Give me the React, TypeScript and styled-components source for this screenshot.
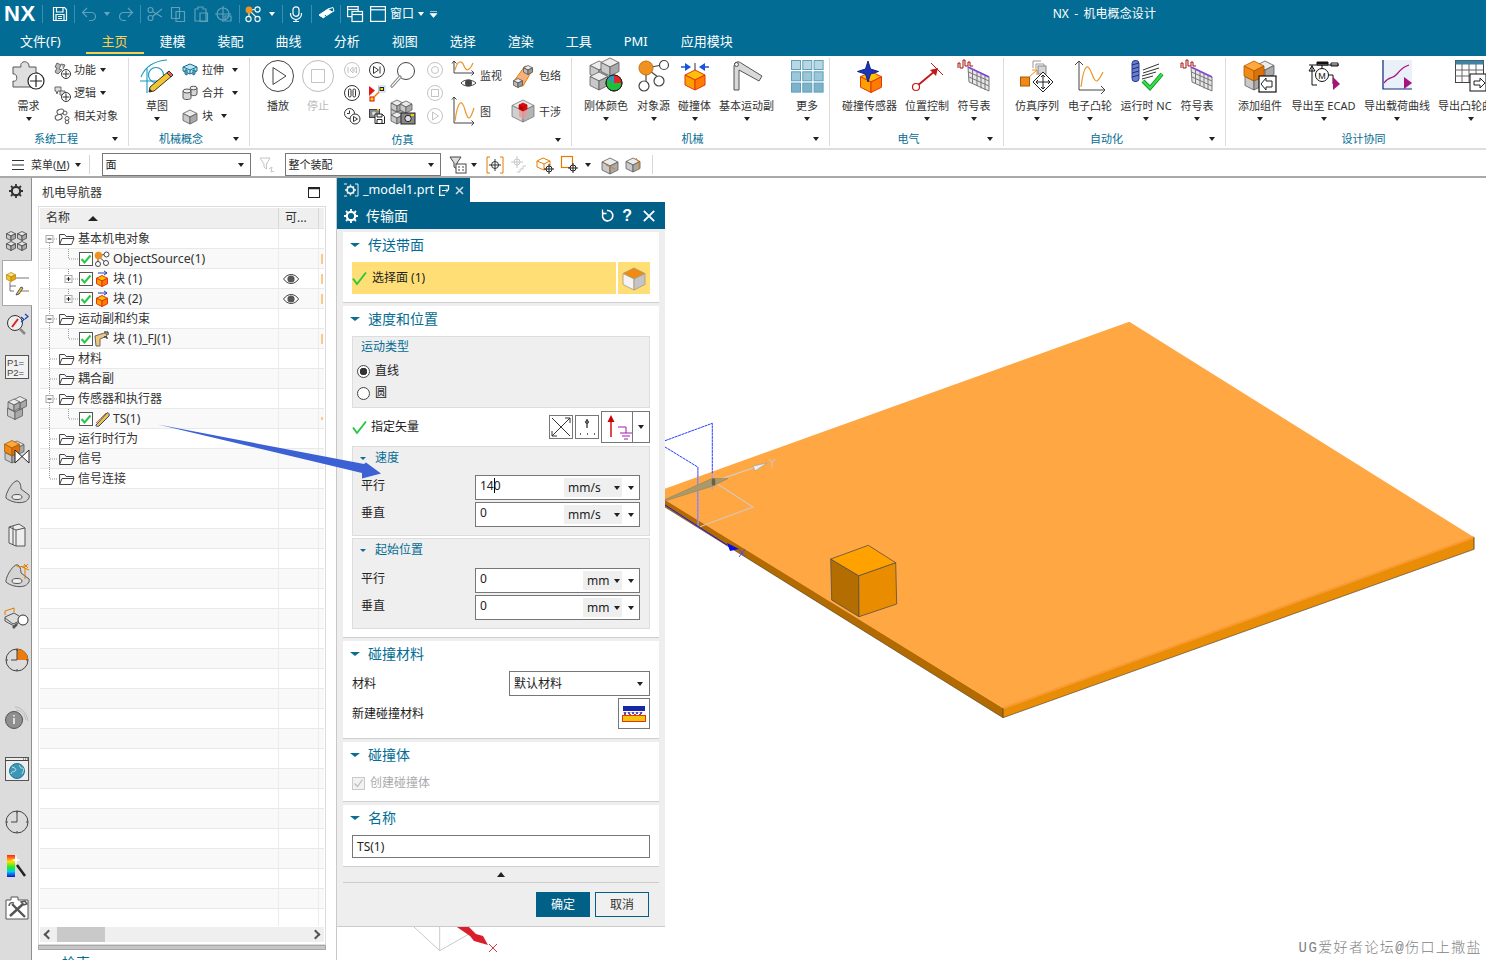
import React from 'react';
import styled, { createGlobalStyle } from 'styled-components';

const FONT = `"Noto Sans","Noto Sans CJK SC",sans-serif`;
const TEAL = '#036c94';
const DEEP = '#006087';

const Global = createGlobalStyle`
  html, body { margin: 0; padding: 0; background: #fff; }
  body { font-family: ${FONT}; font-size: 12px; color: #222; }
  * { box-sizing: border-box; }
`;

const Page = styled.div`
  width: 1486px; height: 960px; overflow: hidden; position: relative;
  display: flex; flex-direction: column; background: #fff;
`;

/* ---------- generic drawing helpers ---------- */
const Svg = styled.svg`display: block; flex: none; overflow: visible;`;
type IcP = { w?: number; h?: number; children?: React.ReactNode };
const Ic = ({ w = 16, h, children }: IcP) => (
  <Svg width={w} height={h ?? w} viewBox={`0 0 ${w} ${h ?? w}`} fill="none">{children}</Svg>
);
type BoxP = { x: number; y: number; r: number; t: string; l: string; n: string; s?: string; sw?: number };
const IsoBox = ({ x, y, r, t, l, n, s = '#555', sw = 0.8 }: BoxP) => (
  <g stroke={s} strokeWidth={sw} strokeLinejoin="round">
    <polygon fill={t} points={`${x},${y - r} ${x + r},${y - r / 2} ${x},${y} ${x - r},${y - r / 2}`} />
    <polygon fill={l} points={`${x - r},${y - r / 2} ${x},${y} ${x},${y + r} ${x - r},${y + r / 2}`} />
    <polygon fill={n} points={`${x + r},${y - r / 2} ${x},${y} ${x},${y + r} ${x + r},${y + r / 2}`} />
  </g>
);
const GrayBox = (p: { x: number; y: number; r: number }) => <IsoBox {...p} t="#ececec" l="#c9c9c9" n="#a9a9a9" s="#5a5a5a" />;
const OrangeBox = (p: { x: number; y: number; r: number }) => <IsoBox {...p} t="#ffc107" l="#ffa000" n="#ff7a00" s="#e2360b" sw={1} />;
const PlusDot = ({ x, y, r = 4.5, c = '#333' }: { x: number; y: number; r?: number; c?: string }) => (
  <g stroke={c}>
    <circle cx={x} cy={y} r={r} fill="#fff" />
    <path d={`M${x - r + 1.2} ${y}h${2 * r - 2.4}M${x} ${y - r + 1.2}v${2 * r - 2.4}`} />
  </g>
);

/* ---------- title bar icons ---------- */
const W = { stroke: '#fff', strokeWidth: 1.2 };
const SaveI = () => <Ic><g {...W}><path d="M1.5 1.5h11l2 2v11h-13z" /><path d="M4.5 1.5v4.5h6.5v-4.5M4 14.5v-6h8v6M6 10.5h4M6 12.5h4" /></g></Ic>;
const DimG = styled.g`opacity: .36;`;
const UndoI = () => <Ic><DimG {...W}><path d="M6 2 1.5 6.5 6 11M1.5 6.5h9a4 4 0 0 1 0 8H8" /></DimG></Ic>;
const RedoI = () => <Ic><DimG {...W}><path d="M10 2l4.5 4.5L10 11M14.5 6.5h-9a4 4 0 0 0 0 8H8" /></DimG></Ic>;
const CutI = () => <Ic><DimG {...W}><circle cx="3.5" cy="12" r="2.5" /><circle cx="3.5" cy="4" r="2.5" /><path d="M5.5 5.5 15 11M5.5 10.5 15 3" /></DimG></Ic>;
const CopyI = () => <Ic><DimG {...W}><path d="M1.5 1.5h8v11h-8zM6 5.5h8.5v10H6z" /></DimG></Ic>;
const PasteI = () => <Ic><DimG {...W}><path d="M2 3h3V1h5v2h3v12H2zM7 7h7.5v8.5H7z" /></DimG></Ic>;
const MoveI = () => <Ic><DimG {...W}><circle cx="7" cy="8" r="6" /><path d="M7 0v16M-1 8h16M9 10h6v5H9z" /></DimG></Ic>;
const ObjSrcSm = () => <Ic><g stroke="#fff" strokeWidth="1.1"><path d="M4 4l8-.5M4 4l0 8M4 4l8 8" /><circle cx="12.5" cy="3.5" r="2.6" fill={TEAL} /><circle cx="3.5" cy="13" r="2.6" fill={TEAL} /><circle cx="12.5" cy="13" r="2.6" fill={TEAL} /></g><circle cx="4" cy="4" r="3.4" fill="#f29321" /></Ic>;
const MicI = () => <Ic w={14} h={16}><g {...W}><rect x="4" y="0.8" width="6" height="9.5" rx="3" /><path d="M1.5 7v1a5.5 5.5 0 0 0 11 0V7M7 13.5v2M4 15.5h6" /></g></Ic>;
const EraserI = () => <Ic><g stroke="#fff" strokeWidth="1"><polygon points="1,9 10,3 14,6 5,12" fill="#fff" /><polygon points="10,3 15,1.5 16,5 14,6" fill={TEAL} /><path d="M3 11l2 2M7 9l1.5 2" stroke={TEAL} /></g></Ic>;
const WinAI = () => <Ic><g {...W}><rect x="0.6" y="0.6" width="10.5" height="10" fill={TEAL} /><path d="M0.6 3.5h10.5" /><rect x="5" y="5.5" width="10.5" height="10" fill={TEAL} /><path d="M5 8.5h10.5" /></g></Ic>;
const WinBI = () => <Ic><g {...W}><rect x="0.6" y="0.6" width="14.8" height="14.8" /><path d="M0.6 3.8h14.8" /></g></Ic>;

/* ---------- ribbon icons ---------- */
const Puzzle = () => <Ic w={34} h={32}><path d="M1 7h8c-2-7 9-7 8 0h7v6c5-2 6 9 0 7v7H1v-6c5 2 5-8 0-7z" fill="#dfdfdf" stroke="#555" /><circle cx="24" cy="21" r="8" fill="#fff" stroke="#222" strokeWidth="1.2" /><path d="M24 15v12M18 21h12" stroke="#222" strokeWidth="1.2" /></Ic>;
const FuncI = () => <Ic><path d="M3 1l4 2-2 4 3 1-4 4-3-2 2-4-2-1zM7 2l4 1-2 4" stroke="#666" fill="#bbb" /><PlusDot x={12} y={12} /></Ic>;
const LogicI = () => <Ic><path d="M1 2h6v4h-3l-1 3-1-3H1zM6 6h5v4H6z" stroke="#666" fill="#ddd" /><PlusDot x={12} y={12} /></Ic>;
const RelI = () => <Ic><g stroke="#555" fill="#fff"><rect x="3" y="1.5" width="7" height="5" rx="2.5" transform="rotate(-20 6 4)" /><rect x="1" y="7" width="7" height="5" rx="2.5" transform="rotate(-20 4 9)" /><circle cx="11" cy="5" r="2" /><circle cx="13" cy="10.5" r="2" /><circle cx="13" cy="14" r="1.8" /></g></Ic>;
const SketchI = () => <Ic w={34} h={34}><g stroke="#1797c4" strokeWidth="1.1"><path d="M1 17C5 7 14 1 27 0M0 21h18M7 8v25" /><circle cx="16" cy="15" r="7.5" /></g><g><polygon points="29,11 33,15 14,31 9,32 10,27" fill="#f5c531" stroke="#333" /><polygon points="29,11 33,15 31,17 27,13" fill="#e9605a" stroke="#333" /><polygon points="9,32 10,29 12,31" fill="#222" /></g></Ic>;
const ExtrudeI = () => <Ic><g stroke="#0e6f92" fill="#bfe2ee"><path d="M1 5l7-3 7 3v4l-7 3-7-3z" /><path d="M1 5l7 3 7-3M8 8v4" /><path d="M5 8v5l-2-1V8zM13 8v4l-2 1V8z" fill="#7fbfd6" /></g></Ic>;
const UniteI = () => <Ic><g stroke="#555" fill="#d6d6d6"><path d="M1 6v7c0 2 8 2 8 0V6" /><ellipse cx="5" cy="6" rx="4" ry="2" fill="#eee" /><path d="M9 3v7c1 1 6 1 6-1V3" /><ellipse cx="11.5" cy="3" rx="3.5" ry="1.8" fill="#eee" /></g></Ic>;
const BlockI = () => <Ic><GrayBox x={8} y={9} r={7} /></Ic>;
const PlayBig = () => <Ic w={32} h={32}><circle cx="16" cy="16" r="15.5" stroke="#444" fill="#fff" /><path d="M11 7.5v17L24 16z" stroke="#444" /></Ic>;
const StopBig = () => <Ic w={32} h={32}><circle cx="16" cy="16" r="15.5" stroke="#bdbdbd" fill="#fff" /><rect x="9.5" y="9.5" width="13" height="13" stroke="#c6c6c6" /></Ic>;
const RoundI = ({ c, children }: { c: string; children: React.ReactNode }) => <Ic><circle cx="8" cy="8" r="7.5" stroke={c} fill="#fff" />{children}</Ic>;
const RewI = () => <RoundI c="#c4c4c4"><path d="M4 5v6M9 5v6l-3-3zM12.5 5v6l-3-3z" stroke="#c4c4c4" /></RoundI>;
const NextI = () => <RoundI c="#333"><path d="M4.5 4.5v7l5-3.5zM11 4.5v7" stroke="#333" /></RoundI>;
const PauseI = () => <RoundI c="#333"><rect x="4.5" y="4" width="2.5" height="8" rx="1.2" stroke="#333" /><rect x="9" y="4" width="2.5" height="8" rx="1.2" stroke="#333" /></RoundI>;
const MarkI = () => <Ic><polygon points="0,1 6,5.5 0,11" fill="#e11919" /><rect x="1" y="12" width="4" height="4" fill="#ffe100" stroke="#d01" /><rect x="9.5" y="1" width="6.5" height="6" fill="#fff" stroke="#7fa8e0" strokeWidth=".6" /><rect x="11" y="2.5" width="3.5" height="3" fill="#ffe100" stroke="#222" /><path d="M5 12l5-5" stroke="#e77b00" strokeWidth="1.5" /></Ic>;
const ClockPlayI = () => <Ic><circle cx="5.5" cy="5.5" r="5" stroke="#333" fill="#fff" /><path d="M5.5 2.5v3H3" stroke="#333" /><circle cx="11" cy="11" r="5" stroke="#333" fill="#fff" /><path d="M9.5 8.5v5l4-2.5z" stroke="#333" /></Ic>;
const CamSaveI = () => <Ic><rect x="0.5" y="1.5" width="10" height="8" fill="#888" stroke="#444" /><circle cx="5" cy="5.5" r="2" fill="#ddd" /><rect x="8" y="1" width="2" height="1.5" fill="#ffcc00" /><path d="M6 6h7l2.5 2.5v7H6z" fill="#fff" stroke="#222" /><path d="M8 6v3h5V6M8 15.5v-4h5v4" stroke="#222" /></Ic>;
const Magnifier = () => <Ic w={26} h={30}><circle cx="16" cy="10" r="8.5" stroke="#444" fill="#fff" /><path d="M10 16 2 25" stroke="#777" strokeWidth="3.2" strokeLinecap="round" /><path d="M10 16 2 25" stroke="#fff" strokeWidth="1.2" strokeLinecap="round" /></Ic>;
const StackCam = () => <Ic w={26} h={26}><GrayBox x={7} y={13} r={6} /><GrayBox x={7} y={7} r={6} /><GrayBox x={16} y={8} r={6} /><GrayBox x={7} y={19} r={6} /><rect x="11" y="14" width="14" height="11" fill="#888" stroke="#222" /><circle cx="18" cy="19.5" r="3.2" fill="#ddd" stroke="#222" /><rect x="21" y="15" width="3" height="2" fill="#ffcc00" /></Ic>;
const DimCircle = () => <RoundI c="#c4c4c4"><circle cx="8" cy="8" r="3.5" stroke="#c4c4c4" /></RoundI>;
const DimSquare = () => <RoundI c="#c4c4c4"><rect x="4.5" y="4.5" width="7" height="7" stroke="#c4c4c4" /></RoundI>;
const DimPlay = () => <RoundI c="#c4c4c4"><path d="M5.5 4v8l6-4z" stroke="#c4c4c4" /></RoundI>;
const Axes = ({ h }: { h: number }) => <path d={`M2 ${h}V1M0 3.5 2 1l2.5 2.5M2 ${h}h20M19.5 ${h - 2.5}l2.5 2.5-2.5 2.5`} stroke="#444" />;
const MonitorI = () => <Ic w={26} h={32}><Axes h={13} /><path d="M3 10c3-11 7-9 9-4s5 6 9-3" stroke="#ef9324" strokeWidth="1.2" /><path d="M9 23c3-4 11-4 15 0-4 4-12 4-15 0z" fill="#fff" stroke="#444" /><circle cx="16.5" cy="23" r="3.5" fill="#444" /></Ic>;
const ChartI = () => <Ic w={26} h={32}><Axes h={27} /><path d="M3 25c3-22 7-22 10-11s5 11 9-2" stroke="#ef9324" strokeWidth="1.2" /></Ic>;
const WrapI = () => <Ic w={24} h={26}><path d="M3 18 14 3l8 3-10 17-8 0z" fill="#f6b27a" stroke="#e77b00" /><IsoBox x={17} y={7} r={4.5} t="#eee" l="#bbb" n="#999" /><IsoBox x={7} y={20} r={4.5} t="#eee" l="#bbb" n="#999" /></Ic>;
const InterfI = () => <Ic w={24} h={24}><IsoBox x={12} y={11} r={11} t="#e8e8e8" l="#cfcfcf" n="#b4b4b4" s="#777" /><path d="M8 7v9l4 3 4-3V7" fill="#e69a9a" opacity=".8" /><IsoBox x={12} y={7} r={4} t="#e40a0a" l="#b30000" n="#cf1010" s="#c00" /></Ic>;
const RigidI = () => <Ic w={36} h={32}><GrayBox x={11} y={10} r={9} /><GrayBox x={22} y={7} r={9} /><GrayBox x={11} y={21} r={9} /><circle cx="26" cy="23" r="8" fill="#1fbf39" stroke="#222" /><path d="M26 23V15a8 8 0 0 1 8 8z" fill="#e5252a" /><path d="M26 23l-7.2-3.5A8 8 0 0 1 26 15z" fill="#2f9ab8" /><circle cx="26" cy="23" r="8" stroke="#222" /></Ic>;
const ObjSrcBig = () => <Ic w={32} h={32}><g stroke="#444" strokeWidth="1.2"><path d="M8 8 24 5M8 8v18M8 8l16 12" /><circle cx="26" cy="5" r="4.5" fill="#fff" /><circle cx="6" cy="26" r="5" fill="#fff" /><circle cx="21" cy="21" r="5" fill="#fff" /></g><circle cx="8" cy="8" r="7" fill="#f0921f" stroke="#c96f10" /></Ic>;
const CollideI = () => <Ic w={30} h={32}><path d="M1 7h9M29 7h-9" stroke="#1a55d9" strokeWidth="1.5" /><polygon points="5,3 11,7 5,11" fill="#1a55d9" /><polygon points="25,3 19,7 25,11" fill="#1a55d9" /><path d="M15 3v8" stroke="#333" /><OrangeBox x={15} y={20} r={10} /></Ic>;
const JointI = () => <Ic w={32} h={32}><path d="M4 3c3-2 5-1 6 0l21 13-3 5L8 10v20H3V6z" fill="#d9d9d9" stroke="#555" /><circle cx="5.5" cy="4.5" r="2" stroke="#555" fill="#eee" /></Ic>;
const MoreI = () => { const c = ['#b9d6e2','#b9d6e2','#b9d6e2','#9cc7d8','#9cc7d8','#9cc7d8','#7fb2c8','#7fb2c8','#7fb2c8']; return <Ic w={32} h={32}>{c.map((f, i) => <rect key={i} x={(i % 3) * 11.3 + 0.5} y={Math.floor(i / 3) * 11.3 + 0.5} width="9" height="9" fill={f} stroke="#5ba0bd" />)}</Ic>; };
const SensorI = () => <Ic w={30} h={34}><OrangeBox x={16} y={22} r={10.5} /><path d="M13 1l2.5 8 8 2.5-8 2.5-2.5 8-2.5-8-8-2.5 8-2.5z" fill="#1a35b8" stroke="#10248a" /></Ic>;
const PosI = () => <Ic w={32} h={32}><path d="M6 26 24 11" stroke="#c41717" strokeWidth="1.8" /><polygon points="27,8 25,16 19,10" fill="#c41717" /><path d="M20 3l12 12" stroke="#c41717" /><circle cx="5" cy="27" r="3.5" stroke="#c41717" fill="#fff" strokeWidth="1.2" /></Ic>;
const TableI = () => <Ic w={34} h={32}><path d="M1 8V3h2v5h3V0h2v6h3V2h2v4h3" stroke="#a50f0f" /><path d="M11 7 32 17v14l-20-9z" fill="#e6e6e6" stroke="#777" /><path d="M11 7l21 10" stroke="#8640df" strokeWidth="1.8" /><path d="M15.5 9v15M20 11v15M24 13.5v15M28 15v15M11.5 12 32 21M12 17l20 9" stroke="#777" /></Ic>;
const SimSeqI = () => <Ic w={34} h={34}><rect x="0.5" y="17" width="9" height="9" fill="#f08a17" stroke="#a85a06" /><path d="M9 17l8-7M12 10h5v5" stroke="#f08a17" /><path d="M13 1h8M13 1v7M16 4h8v8M16 4v5" stroke="#999" /><rect x="18" y="6" width="8" height="8" fill="#d5d5d5" stroke="#888" /><polygon points="23,12 33,22 23,32 13,22" fill="#fff" stroke="#222" /><path d="M23 15v14M16 22h14M21 17l2-2 2 2M21 27l2 2 2-2M18 20l-2 2 2 2M28 20l2 2-2 2" stroke="#222" /></Ic>;
const CamI = () => <Ic w={32} h={32}><path d="M5 30V1M1 5l4-4 4 4M5 30h26M27 26l4 4-4 4" stroke="#444" /><path d="M7 27c3-24 7-24 11-13s6 8 11-2" stroke="#ef9324" strokeWidth="1.2" /></Ic>;
const NcI = () => <Ic w={34} h={32}><rect x="3" y="0.5" width="7" height="21" rx="3" fill="#6a7ed0" stroke="#273a93" /><path d="M3 5l7-2M3 9l7-2M3 13l7-2M3 17l7-2" stroke="#1f2f7d" /><path d="M14 13 30 8M14 10l16-6M13 16l14-4M13 19l11-3" stroke="#333" /><path d="M14 21l7 7 12-14" stroke="#0d9d25" strokeWidth="4" /><path d="M14 21l7 7 12-14" stroke="#39e04c" strokeWidth="2" /></Ic>;
const AddCompI = () => <Ic w={34} h={34}><GrayBox x={22} y={10} r={9} /><GrayBox x={11} y={21} r={9} /><IsoBox x={11} y={11} r={10} t="#ffa83b" l="#f08a17" n="#dd7209" s="#a85a06" /><rect x="16" y="16" width="17" height="16" fill="#fff" stroke="#111" strokeWidth="1.2" /><path d="M29 21h-6v-3l-5 6 5 6v-3h6z" fill="#fff" stroke="#222" /></Ic>;
const EcadI = () => <Ic w={32} h={32}><path d="M1 5h30M9 2h11v3H9zM23 3h7v3h-7z" stroke="#111" /><rect x="9" y="2" width="11" height="2" fill="#111" /><circle cx="14" cy="15" r="6.5" stroke="#111" fill="#fff" /><text x="14" y="18.5" fontSize="9" fill="#111" textAnchor="middle" fontFamily="Liberation Sans">M</text><path d="M4 5v20M14 5v4M4 25h5M21 15h4v9M1 11l3-5 3 5z" stroke="#111" /><polygon points="25,17 32,24 25,30" fill="#a8127e" /></Ic>;
const LoadI = () => <Ic w={30} h={30}><rect x="0" y="0" width="30" height="29" fill="#e9f0f7" /><path d="M1 0v29h29" stroke="#112a7a" strokeWidth="1.2" /><path d="M2 23c6-8 8-3 13-9s7-7 12-9" stroke="#a8127e" strokeWidth="1.2" /><polygon points="22,17 30,23 22,29" fill="#a8127e" /></Ic>;
const ExpTableI = () => <Ic w={32} h={32}><rect x="0.5" y="0.5" width="28" height="22" fill="#fff" stroke="#444" /><rect x="0.5" y="0.5" width="28" height="4" fill="#3b84a3" /><path d="M0 10h28M0 16h28M7 4v18M14 4v18M21 4v18" stroke="#666" /><rect x="15" y="14" width="16" height="17" fill="#fff" stroke="#111" /><path d="M19 21h6v-3l5 5-5 5v-3h-6z" fill="#fff" stroke="#222" /></Ic>;

/* ---------- toolbar icons ---------- */
const MenuI = () => <Ic w={12} h={10}><path d="M0 .5h12M0 5h12M0 9.5h12" stroke="#333" /></Ic>;
const FilterDim = () => <Ic><path d="M1 1h10L7.5 7v5L5 10V7z" stroke="#c4c4c4" /><path d="M10 12l3-2-1 5 3-1" stroke="#c4c4c4" /></Ic>;
const FilterSel = () => <Ic w={18} h={18}><path d="M1 1h11L8 7v6L5 11V7z" stroke="#444" fill="#ddd" /><rect x="7" y="8" width="10" height="9" fill="#fff" stroke="#444" /><path d="M9 11h2M13 11h2M9 14h2M13 14h2" stroke="#444" /></Ic>;
const SnapI = () => <Ic w={18} h={18}><path d="M4 1H1v16h3M14 1h3v16h-3" stroke="#e77b00" /><circle cx="9" cy="9" r="3.5" stroke="#333" /><path d="M9 3v12M3 9h12" stroke="#333" /></Ic>;
const SnapDim = () => <Ic w={18} h={18}><circle cx="6" cy="6" r="3" stroke="#c8c8c8" /><path d="M6 0v12M0 6h12M6 16h3v-3h3v-3h3" stroke="#c8c8c8" /></Ic>;
const BoxCross = () => <Ic w={18} h={18}><path d="M1 5l6-3 7 3v6l-6 3-7-3z M1 5l7 3 6-3M8 8v6" stroke="#e77b00" /><circle cx="13" cy="13" r="3" stroke="#222" fill="#fff" /><path d="M13 8v10M8 13h10" stroke="#222" /></Ic>;
const SqCross = () => <Ic w={18} h={18}><rect x="0.5" y="0.5" width="11" height="11" stroke="#e77b00" strokeWidth="1.2" /><circle cx="12" cy="12" r="3" stroke="#222" fill="#fff" /><path d="M12 7v10M7 12h10" stroke="#222" /></Ic>;
const BoxLine = () => <Ic w={18} h={16}><GrayBox x={9} y={9} r={8} /><path d="M5 8l9 4" stroke="#e77b00" /></Ic>;
const BoxEdge = () => <Ic w={16} h={16}><GrayBox x={7} y={8} r={7} /><path d="M10 1l3 5v6" stroke="#e77b00" /></Ic>;

/* ---------- rail icons ---------- */
const GearI = ({ c = '#333', hole = '#dcdcdc' }: { c?: string; hole?: string }) => <Ic w={14} h={14}><circle cx="7" cy="7" r="4.2" stroke={c} strokeWidth="2.2" fill={hole} /><path d="M7 0v2.5M7 11.5V14M0 7h2.5M11.5 7H14M2 2l1.8 1.8M10.2 10.2 12 12M12 2l-1.8 1.8M3.8 10.2 2 12" stroke={c} strokeWidth="1.8" /></Ic>;
const FourI = () => <Ic w={22} h={20}>{[[5,5],[16,5],[5,15],[16,15]].map(([x, y], i) => <IsoBox key={i} x={x} y={y} r={4.5} t="#e6e6e6" l="#c8c8c8" n="#aaa" s="#444" />)}</Ic>;
const AsmI = () => <Ic w={24} h={22}><IsoBox x={5} y={5} r={4.5} t="#ffe48a" l="#f9c52b" n="#e8a513" s="#b88a12" /><path d="M10 6h13M4 10v9M4 14h6M4 19h4M15 19h8" stroke="#777" /><path d="M11 21l4-6 2 1-4 6-3 1z" fill="#f5c531" stroke="#555" /></Ic>;
const AnalyzeI = () => <Ic w={26} h={24}><circle cx="11" cy="10" r="7.5" stroke="#333" fill="#eee" /><path d="M8 14l6-8" stroke="#d22" strokeWidth="2" /><path d="M16 16l5 5" stroke="#888" strokeWidth="2.5" /><path d="M17 4l3 2.5-3 2.5M21 1l3 2.5-3 2.5" stroke="#223fb0" strokeWidth="1.2" /></Ic>;
const ParamI = () => <Ic w={24} h={24}><rect x="0.5" y="0.5" width="23" height="23" fill="#f2f2f2" stroke="#555" /><text x="2" y="11" fontSize="9.5" fill="#444" fontFamily="Liberation Sans">P1=</text><text x="2" y="20.5" fontSize="9.5" fill="#444" fontFamily="Liberation Sans">P2=</text></Ic>;
const CubesI = () => <Ic w={20} h={24}><GrayBox x={8} y={16} r={7.5} /><GrayBox x={13} y={7} r={6.5} /><GrayBox x={7} y={9} r={6} /></Ic>;
const BowI = () => <Ic w={26} h={26}><GrayBox x={13} y={9} r={7} /><GrayBox x={8} y={17} r={7} /><IsoBox x={8} y={9} r={7.5} t="#ffa83b" l="#f08a17" n="#dd7209" s="#a85a06" /><path d="M11 11l14 13V11L11 24z" stroke="#222" fill="#fff" /></Ic>;
const BracketI = ({ dims }: { dims?: boolean }) => <Ic w={26} h={26}><path d="M12 1c3-1 5 3 5 8l8 6c1 2-1 6-5 7-6 2-15-1-18-4-1-3 5-15 10-17z" fill="#d4d4d4" stroke="#555" /><ellipse cx="13" cy="17" rx="5" ry="2.5" fill="#eee" stroke="#555" />{dims && <path d="M11 1l4 2 6-1M18 3l7 3M24 0l-4 4M20 0l4 4M21 5v10" stroke="#e77b00" />}</Ic>;
const BooksI = () => <Ic w={18} h={24}><path d="M1 4l10-3 6 4v18H8L1 20z" fill="#eee" stroke="#555" /><path d="M5 3v19M1 4l7 3v16M8 7l9-2" stroke="#555" /></Ic>;
const MagBoxI = () => <Ic w={26} h={26}><polygon points="1,10 10,6 20,12 10,19 1,14" fill="#ddd" stroke="#555" /><path d="M1 11 9 17 20 12" stroke="#555" /><path d="M1 8V4l9-3v4" stroke="#e77b00" /><path d="M13 17l-4 4" stroke="#555" strokeWidth="2.5" /><circle cx="19" cy="13" r="5" fill="#fff" stroke="#333" /></Ic>;
const ClockI = ({ fill }: { fill?: boolean }) => <Ic w={24} h={24}><circle cx="12" cy="12" r="11" stroke="#444" fill="none" />{fill && <path d="M12 1a11 11 0 0 1 11 11H12z" fill="#ee7c0c" />}<path d="M12 1v11H6M12 1v2M12 21v2M1 12h2M21 12h2" stroke="#444" /></Ic>;
const InfoI = () => <Ic w={24} h={24}><path d="M10 2c6 0 12 6 13 14M11 5c5 0 9 4 10 10M12 8c3 1 6 3 6 7" stroke="#bbb" /><circle cx="9" cy="15" r="8.5" fill="#8f8f8f" stroke="#555" /><path d="M9 13v6M9 10v1.5" stroke="#fff" strokeWidth="1.4" /></Ic>;
const GlobeI = () => <Ic w={24} h={24}><rect x="0.5" y="0.5" width="23" height="23" fill="#eee" stroke="#555" /><path d="M0 3.5h24M18 2h1M20 2h1M22 2h1" stroke="#444" /><circle cx="12" cy="14" r="7.5" fill="#3c96b5" stroke="#1e7897" /><path d="M7 10c3 1 5 2 3 4s-3-1-4 3M14 8c2 2 0 3 3 3s1 4 0 6" stroke="#cfe6ee" /></Ic>;
const ColorI = () => <Ic w={22} h={24}><defs><linearGradient id="rb" x1="0" x2="0" y1="0" y2="1"><stop offset="0" stopColor="#f22" /><stop offset=".3" stopColor="#fd0" /><stop offset=".55" stopColor="#2e2" /><stop offset=".75" stopColor="#0ce" /><stop offset="1" stopColor="#11d" /></linearGradient></defs><rect x="1" y="1" width="8" height="22" fill="url(#rb)" /><path d="M11 11l8 11" stroke="#222" strokeWidth="2.5" /><path d="M10 0l1 5 4 1-4 1-1 4-1-4-4-1 4-1z" fill="#fff" /></Ic>;
const ToolI = () => <Ic w={24} h={24}><path d="M1 4h5V1h7v3h10v19H1z" fill="#fff" stroke="#555" /><path d="M5 20 18 8M7 8l13 13" stroke="#555" strokeWidth="2.4" /><path d="M4 10c0-3 2-4 5-3M16 6l4-1 2 3-3 1z" stroke="#555" strokeWidth="1.4" fill="#ddd" /></Ic>;

/* ---------- tree icons ---------- */
const FolderI = () => <Ic w={16} h={14}><path d="M.6 12.5V2.5h5l1.5 2h7.5v2" stroke="#444" strokeWidth="1" /><path d="M.6 12.5 3 6.5h12l-2.4 6z" stroke="#444" fill="#fff" /></Ic>;
const CheckBoxI = () => <Ic w={14} h={14}><rect x="0.5" y="0.5" width="13" height="13" fill="#fff" stroke="#555" /><path d="M2.5 7l3 3.5 6-7" stroke="#27c744" strokeWidth="2" /></Ic>;
const ObjTiny = () => <Ic w={16} h={16}><g stroke="#444"><path d="M4 5l8-2M4 5v8M4 5l8 7" /><circle cx="12.5" cy="3.5" r="2.5" fill="#fff" /><circle cx="4" cy="13" r="2.5" fill="#fff" /><circle cx="12" cy="12" r="2.5" fill="#fff" /></g><circle cx="4.5" cy="4.5" r="3.8" fill="#f0921f" /></Ic>;
const BlockTiny = () => <Ic w={14} h={16}><path d="M3 2h9M9 0l3 2-3 2" stroke="#223fb0" /><OrangeBox x={7} y={10} r={5.5} /></Ic>;
const JointTiny = () => <Ic w={16} h={16}><path d="M1 5c3-1 8-3 11-3l1 3-7 3v7H2z" fill="#eec77a" stroke="#666" /><path d="M10 1h4v3M10 6h3v2" stroke="#111" /></Ic>;
const BeltTiny = () => <Ic w={15} h={16}><path d="M1 14 12 2c1-1 3 1 2 3L4 15c-1 1-4 0-3-1z" fill="#f5c531" stroke="#223fb0" /><path d="M1 12 11 2" stroke="#e77b00" /></Ic>;
const EyeI = () => <Ic w={16} h={12}><path d="M.6 6c4-6 11-6 15 0-4 6-11 6-15 0z" fill="#fff" stroke="#444" /><circle cx="8" cy="6" r="3.6" fill="#555" /></Ic>;
const MaxI = () => <Ic w={12} h={11}><rect x="0.5" y="0.5" width="11" height="10" stroke="#222" /><path d="M0 1.5h12" stroke="#222" strokeWidth="1.5" /></Ic>;
const Guide = ({ kind, row }: { kind: 'minus' | 'leaf' | 'plus' | 'child' | 'childplus'; row: number }) => {
  const dot = { stroke: '#999', strokeDasharray: '1 1' };
  const isTop = kind === 'minus' || kind === 'leaf';
  return (
    <Ic w={isTop ? 19 : 39} h={19}>
      <path d={row === 0 ? 'M9.5 10V19' : row === 12 ? 'M9.5 0V10' : 'M9.5 0V19'} {...dot} />
      {isTop && <path d="M10 10h8" {...dot} />}
      {(kind === 'child' || kind === 'childplus') && <path d={`M28.5 0V10M29 10h10`} {...dot} />}
      {kind === 'minus' && <g><rect x="6" y="6.5" width="7" height="7" fill="#fff" stroke="#aaa" /><path d="M7.5 10h4" stroke="#222" /></g>}
      {kind === 'childplus' && <g><rect x="25" y="6.5" width="7" height="7" fill="#fff" stroke="#aaa" /><path d="M26.5 10h4M28.5 8v4" stroke="#222" /></g>}
    </Ic>
  );
};

/* ---------- dialog icons ---------- */
const OkCheck = () => <Ic w={15} h={14}><path d="M1 7.5 5 13 14 1.5" stroke="#27c744" strokeWidth="1.9" /></Ic>;
const FaceBtnI = () => <Ic w={24} h={24}><IsoBox x={12} y={13} r={11} t="#f08a10" l="#f4f4f4" n="#c4c4c4" s="#a8977a" /></Ic>;
const VecA = () => <Ic w={20} h={20}><path d="M1 1l18 18M19 1 1 19M1 14v5h5M14 1h5v5" stroke="#333" /></Ic>;
const VecB = () => <Ic w={20} h={20}><path d="M10 2v9" stroke="#333" strokeWidth="1.3" /><circle cx="10" cy="5" r="1.5" stroke="#333" /><path d="M3 17h1M10 17h1M17 17h1" stroke="#333" strokeWidth="1.4" /></Ic>;
const VecC = () => <Ic w={26} h={26}><path d="M7 23V6" stroke="#c00" strokeWidth="1.4" /><polygon points="7,1 10.5,8 3.5,8" fill="#c00" /><path d="M14 13h8v6M16 19h12M18 22h8M20 25h4" stroke="#a019a8" /></Ic>;
const MatI = () => <Ic w={24} h={16}><rect x="1" y="0" width="22" height="5" fill="#1627a8" /><path d="M2 6l1 2 1-2M6 6l1 2 1-2M10 6l1 2 1-2M14 6l1 2 1-2M18 6l1 2 1-2" stroke="#1627a8" /><rect x="0.5" y="9.5" width="23" height="6" fill="#f3c511" stroke="#e63312" /><path d="M2 9l1-1 1 1M7 9l1-1 1 1M12 9l1-1 1 1M17 9l1-1 1 1" stroke="#e63312" /></Ic>;
const RefreshI = () => <Ic w={13} h={13}><path d="M5 1.5a5.2 5.2 0 1 1-3.5 2" stroke="#fff" strokeWidth="1.6" /><path d="M.5 .5v4h4" stroke="#fff" strokeWidth="1.3" /></Ic>;
const CloseI = () => <Ic w={12} h={12}><path d="M.8 .8l10.4 10.4M11.2 .8 .8 11.2" stroke="#fff" strokeWidth="1.8" /></Ic>;
const TabGear = () => <Ic w={14} h={14}><path d="M0 1h3M0 13h3M11 1h3v12h-3" stroke="#eee" /><circle cx="6.5" cy="7" r="3.4" stroke="#eee" strokeWidth="1.8" /><path d="M6.5 1.5v2M6.5 10.5v2M1 7h2M10 7h2M3 3.5l1 1M9 9.5l1 1M10 3.5l-1 1M4 9.5l-1 1" stroke="#eee" strokeWidth="1.3" /></Ic>;
const DocI = () => <Ic w={10} h={11}><path d="M9.5 5V.7H.7v9.6H6" stroke="#fff" strokeWidth="1.3" /><path d="M3 5.5h6M7 3.5l2 2-2 2" stroke="#fff" /></Ic>;

/* ---------- top chrome ---------- */
const TitleBar = styled.div`
  height: 28px; background: ${TEAL}; color: #fff; display: flex; align-items: center; flex: none;
`;
const Logo = styled.span`
  font: bold 22px/28px "Liberation Sans", sans-serif; letter-spacing: .5px; color: #fff; margin-left: 4px; width: 33px;
`;
const QSep = styled.span<{ $ml: number }>`width: 1px; height: 18px; background: #3b8fb2; margin-left: ${p => p.$ml}px;`;
const QSlot = styled.span<{ $ml: number }>`display: flex; align-items: center; margin-left: ${p => p.$ml}px;`;
const QText = styled.span`font-size: 12px; line-height: 16px; color: #fff; margin-left: 4px;`;
const Caret = styled.i<{ $c?: string; $ml?: number; $mt?: number; $op?: number }>`
  display: block; flex: none; width: 0; height: 0;
  border-left: 3.5px solid transparent; border-right: 3.5px solid transparent;
  border-top: 4px solid ${p => p.$c ?? '#222'};
  margin-left: ${p => p.$ml ?? 0}px; margin-top: ${p => p.$mt ?? 0}px; opacity: ${p => p.$op ?? 1};
`;
const AppName = styled.span`margin-left: auto; margin-right: 330px; font-size: 12px; line-height: 16px; color: #fff; word-spacing: 2px; letter-spacing: .1px;`;

const MenuBar = styled.div`
  height: 28px; background: ${TEAL}; display: flex; flex: none; padding-left: 4px;
`;
const MenuTab = styled.div<{ $on?: boolean; $mr?: number }>`
  padding: 0 16px; height: 26px; line-height: 26px; font-size: 13px; white-space: nowrap;
  color: ${p => (p.$on ? '#ffcf4a' : '#fff')};
  margin-right: ${p => p.$mr ?? 0}px;
  border-bottom: 2px solid ${p => (p.$on ? '#ffcf4a' : 'transparent')};
`;

const Ribbon = styled.div`
  height: 94px; flex: none; display: flex; padding-top: 2px; background: #fff; overflow: hidden;
  border-bottom: 2px solid #dedede;
`;
const Group = styled.div<{ $w: number }>`
  width: ${p => p.$w}px; flex: none; height: 88px; display: flex; flex-direction: column;
  border-right: 1px solid #dcdcdc;
`;
const GroupBody = styled.div`height: 73px; display: flex;`;
const GroupFoot = styled.div`
  display: grid; grid-template-columns: 1fr 16px; align-items: center; height: 14px; margin-top: 3px;
`;
const GroupName = styled.span`text-align: center; font-size: 11px; line-height: 14px; color: ${TEAL};`;
const Large = styled.div<{ $ml?: number; $w?: number }>`
  display: flex; flex-direction: column; align-items: center; flex: none; padding-top: 2px;
  margin-left: ${p => p.$ml ?? 0}px; width: ${p => (p.$w ? `${p.$w}px` : 'auto')};
`;
const IconSlot = styled.div`height: 39px; display: flex; align-items: flex-start; justify-content: center; width: 100%;`;
const LargeLabel = styled.span<{ $dim?: boolean }>`
  font-size: 11px; line-height: 14px; white-space: nowrap; color: ${p => (p.$dim ? '#bbb' : '#333')};
  margin-bottom: 4px;
`;
const SmallCol = styled.div<{ $ml?: number }>`
  display: flex; flex-direction: column; flex: none; margin-left: ${p => p.$ml ?? 0}px;
`;
const SmallItem = styled.div`height: 23px; display: flex; align-items: center; gap: 4px;`;
const SmallText = styled.span`font-size: 11px; line-height: 14px; color: #333; white-space: nowrap;`;
const TallItem = styled.div<{ $gap?: number }>`height: 36px; display: flex; align-items: center; gap: ${p => p.$gap ?? 4}px;`;

const Toolbar = styled.div`
  height: 28px; flex: none; display: flex; align-items: center; background: #fff;
  border-bottom: 2px solid #a9a9a9; padding-top: 3px;
`;
const TSlot = styled.span<{ $ml: number }>`display: flex; align-items: center; margin-left: ${p => p.$ml}px;`;
const TText = styled.span`font-size: 11px; line-height: 14px; color: #333; margin-left: 7px; white-space: nowrap;`;
const U = styled.span`text-decoration: underline;`;
const TSep = styled.span<{ $ml: number }>`width: 1px; height: 19px; background: #d6d6d6; margin-left: ${p => p.$ml}px;`;
const TSelect = styled.div<{ $w: number; $ml: number }>`
  width: ${p => p.$w}px; height: 23px; margin-left: ${p => p.$ml}px; border: 1px solid #777; background: #fff;
  display: flex; align-items: center; justify-content: space-between; padding: 0 6px 0 3px;
  font-size: 11px; line-height: 14px; color: #222;
`;

/* ---------- main area ---------- */
const Main = styled.div`flex: 1; display: flex; min-height: 0;`;
const Rail = styled.div`
  width: 32px; flex: none; background: #dcdcdc; border-right: 1px solid #8f8f8f;
  display: flex; flex-direction: column; align-items: stretch;
`;
const RailItem = styled.div<{ $h: number; $mt: number; $on?: boolean; $pl?: number }>`
  height: ${p => p.$h}px; margin-top: ${p => p.$mt}px; flex: none;
  display: flex; align-items: center; justify-content: center; padding-left: ${p => p.$pl ?? 2}px;
  ${p => p.$on ? `background:#fff; border:1px solid #a9a9a9; border-right:none; margin-left:2px; margin-right:-1px; padding-left:0;` : ''}
`;

const Nav = styled.div`
  width: 305px; flex: none; display: flex; flex-direction: column; background: #fff; padding: 0 10px 0 6px;
  border-right: 1px solid #c9c9c9; overflow: hidden;
`;
const NavHead = styled.div`
  height: 28px; flex: none; display: flex; align-items: center; justify-content: space-between;
  padding: 1px 6px 0 4px; font-size: 12px; line-height: 16px; color: #333;
`;
const TreeFrame = styled.div`
  flex: none; border: 1px solid #dcdcdc; padding: 1px; height: 739px; display: flex; flex-direction: column;
  width: 288px;
`;
const TableHead = styled.div`
  height: 21px; flex: none; display: flex; background: #efefef; border-bottom: 1px solid #e4e4e4;
  font-size: 12px; line-height: 16px; color: #333;
`;
const ColName = styled.div`width: 239px; flex: none; display: flex; align-items: center; padding-left: 6px; border-right: 1px solid #d8d8d8;`;
const ColVis = styled.div`width: 40px; flex: none; display: flex; align-items: center; padding-left: 6px; border-right: 1px solid #d8d8d8;`;
const SortUp = styled.i`
  width: 0; height: 0; margin-left: 18px; display: block;
  border-left: 5px solid transparent; border-right: 5px solid transparent; border-bottom: 5px solid #222;
`;
const Rows = styled.div`height: 697px; overflow: hidden; flex: none;`;
const Row = styled.div<{ $alt: boolean }>`
  height: 20px; display: flex; border-bottom: 1px solid #e8e8e8;
  background: ${p => (p.$alt ? '#f9f9f9' : '#fff')};
`;
const CellName = styled.div`
  width: 239px; flex: none; display: flex; align-items: center; border-right: 1px solid #ececec;
  font-size: 12px; line-height: 16px; color: #333; white-space: nowrap;
`;
const CellVis = styled.div`width: 40px; flex: none; display: flex; align-items: center; justify-content: center; padding-right: 16px; border-right: 1px solid #ececec;`;
const CellEnd = styled.div`flex: 1; display: flex; align-items: center; justify-content: flex-end;`;
const Tick = styled.i<{ $h: number }>`display: block; width: 2px; height: ${p => p.$h}px; background: #fbc98b; margin-right: 1px;`;
const FolderGap = styled.span`width: 3px; flex: none;`;
const LeafCheck = styled.span`margin-right: 1px; display: flex;`;
const LeafIcon = styled.span`width: 16px; margin-right: 3px; display: flex; justify-content: center; flex: none;`;
const LeafText = styled.span<{ $fs?: number }>`font-size: ${p => p.$fs ?? 12}px;`;
const ScrollBar = styled.div`
  height: 15px; flex: none; margin-top: 1px; background: #efefef; display: flex; align-items: center; justify-content: space-between;
  padding: 0 5px;
`;
const Thumb = styled.i`display: block; width: 48px; height: 15px; background: #c9c9c9; margin-left: 5px; margin-right: auto;`;
const BottomBar = styled.div`height: 5px; flex: none; width: 288px; background: #c6c6c6; border: 1px solid #a8a8a8;`;
const SearchRow = styled.div`height: 20px; flex: none; display: flex; align-items: center; gap: 9px; padding: 5px 0 0 11px; font-size: 14px; line-height: 16px; color: ${TEAL};`;
const Chevron = styled.i<{ $d: 'l' | 'r' }>`
  display: block; width: 7px; height: 7px; border-top: 2px solid #555; border-left: 2px solid #555;
  transform: rotate(${p => (p.$d === 'l' ? -45 : 135)}deg);
`;
const SideTri = styled.i`display:block;width:0;height:0;border-top:3px solid transparent;border-bottom:3px solid transparent;border-left:4px solid #333;`;

const Work = styled.div`flex: 1; display: flex; flex-direction: column; min-width: 0;`;
const TabBar = styled.div`height: 24px; flex: none; background: #fff; display: flex;`;
const FileTab = styled.div`
  width: 133px; height: 24px; background: ${DEEP}; color: #fff; display: flex; align-items: center;
  padding-left: 7px; font-size: 12.6px; line-height: 16px; white-space: nowrap;
`;
const TabName = styled.span`margin-left: 5px; margin-right: 5px;`;
const TabX = styled.span`margin-left: 6px; display: flex; opacity: .85;`;
const Viewport = styled.div`flex: 1; position: relative; background: #fff; overflow: hidden;`;
const Canvas = styled.svg`position: absolute; left: 0; top: 0;`;

/* ---------- dialog ---------- */
const Dialog = styled.div`
  position: absolute; left: 0; top: 0; width: 328px; background: #eee; border-bottom: 1px solid #ccc;
  display: flex; flex-direction: column;
`;
const DlgHead = styled.div`
  height: 27px; background: ${DEEP}; color: #fff; display: flex; align-items: center; padding: 0 10px 0 7px; flex: none;
  font-size: 14px; line-height: 18px;
`;
const DlgTitle = styled.span`margin-left: 8px; flex: 1;`;
const DlgHelp = styled.span`font: bold 16px/18px "Liberation Sans", sans-serif; margin: 0 11px 0 7px;`;
const DlgBody = styled.div`padding: 3px 6px 0; display: flex; flex-direction: column;`;
const Section = styled.section`
  background: #fff; border-bottom: 1px solid #cfcfcf; margin-bottom: 3px; padding: 0 9px; display: flex; flex-direction: column;
`;
const SecHead = styled.div`
  height: 26px; flex: none; display: flex; align-items: center; margin-left: -2px; gap: 8px;
  font-size: 14px; line-height: 18px; color: ${TEAL};
`;
const Tri = styled.i<{ $s?: number; $c?: string }>`
  display: block; width: 0; height: 0; flex: none;
  border-left: ${p => p.$s ?? 5}px solid transparent; border-right: ${p => p.$s ?? 5}px solid transparent;
  border-top: ${p => (p.$s ?? 5) * 0.95}px solid ${p => p.$c ?? '#0b6d91'};
`;
const SelectRow = styled.div`display: flex; gap: 2px; margin-top: 4px; height: 32px; margin-bottom: 8px;`;
const SelectMain = styled.div`
  width: 264px; background: #ffde75; display: flex; align-items: center; gap: 5px; font-size: 12px; line-height: 16px; color: #222;
`;
const SelectBtn = styled.div`width: 32px; background: #ffde75; display: flex; align-items: center; justify-content: center;`;
const Box = styled.div<{ $mt?: number }>`
  background: #efefef; border: 1px solid #ddd; margin-top: ${p => p.$mt ?? 0}px; display: flex; flex-direction: column;
`;
const BoxTitle = styled.div`font-size: 12px; line-height: 16px; color: ${TEAL}; padding: 2px 8px 0; height: 23px;`;
const RadioRow = styled.div`height: 22px; display: flex; align-items: center; gap: 5px; padding-left: 4px; font-size: 12px; line-height: 16px; color: #222;`;
const Radio = styled.i<{ $on?: boolean }>`
  display: block; width: 13px; height: 13px; border-radius: 50%; border: 1px solid #444; background: #fff;
  ${p => p.$on ? `background: radial-gradient(circle, #333 0 3.5px, #fff 4px);` : ''}
`;
const VecRow = styled.div`
  height: 32px; margin-top: 3px; display: flex; align-items: center; font-size: 12px; line-height: 16px; color: #222;
`;
const VecText = styled.span`margin-left: 4px; flex: 1;`;
const VecBtn = styled.div`
  width: 24px; height: 24px; border: 1px solid #777; background: #fff; display: flex; align-items: center; justify-content: center; flex: none;
  margin-right: 2px;
`;
const VecSplit = styled.div`
  width: 49px; height: 32px; flex: none; border: 1px solid #777; background: #fff; display: grid; grid-template-columns: 31px 1fr;
`;
const VecMain = styled.div`display: flex; align-items: center; justify-content: center; border-right: 1px solid #777;`;
const VecDrop = styled.div`display: flex; align-items: center; justify-content: center;`;
const Gap = styled.i<{ $h: number }>`display: block; height: ${p => p.$h}px; flex: none;`;
const FoldHead = styled.div`
  height: 22px; display: flex; align-items: center; gap: 9px; padding-left: 7px; font-size: 12px; line-height: 16px; color: ${TEAL};
`;
const FieldRow = styled.div<{ $mt?: number }>`
  display: flex; align-items: center; padding-left: 8px; margin-top: ${p => p.$mt ?? 0}px; height: 25px;
`;
const FieldLabel = styled.span`width: 114px; flex: none; font-size: 12px; line-height: 16px; color: #222; padding-bottom: 3px;`;
const NumBox = styled.div`
  width: 165px; height: 25px; border: 1px solid #777; background: #fff; display: flex; align-items: stretch; flex: none;
`;
const NumVal = styled.span`flex: 1; padding-left: 4px; font-size: 12px; line-height: 20px; color: #222;`;
const Cursor = styled.i`display: inline-block; width: 1px; height: 15px; background: #000; vertical-align: -3px; margin: 0 -1px 0 0;`;
const Unit = styled.span<{ $w: number }>`
  width: ${p => p.$w}px; margin: 2px 0; background: #efefef; display: flex; align-items: center; justify-content: space-between;
  padding: 0 2px 0 4px; font-size: 12px; line-height: 16px; color: #222; padding-top: 1px;
`;
const OuterDrop = styled.span`width: 17px; display: flex; align-items: center; justify-content: center;`;
const PlainRow = styled.div<{ $h: number; $mt?: number }>`
  height: ${p => p.$h}px; display: flex; align-items: center; justify-content: space-between; margin-top: ${p => p.$mt ?? 0}px;
  font-size: 12px; line-height: 16px; color: #222; padding-top: 1px;
`;
const DropBox = styled.div`
  width: 141px; height: 25px; margin-top: -1px; border: 1px solid #777; background: #fff; display: flex; align-items: center; justify-content: space-between;
  padding: 1px 6px 0 4px; font-size: 12px; line-height: 16px; color: #222;
`;
const MatBtn = styled.div`
  width: 32px; height: 31px; margin-top: -1px; border: 1px solid #777; background: #fff; display: flex; align-items: center; justify-content: center;
`;
const DisabledRow = styled.div`
  display: flex; align-items: center; gap: 5px; height: 14px; margin: 8px 0 11px; font-size: 12px; line-height: 16px; color: #aaa;
`;
const DisabledBox = styled.i`
  display: flex; align-items: center; justify-content: center; width: 13px; height: 13px; border: 1px solid #c9c9c9; background: #f2f2f2;
`;
const NameInput = styled.div`
  height: 23px; margin-top: 4px; margin-bottom: 8px; border: 1px solid #777; padding: 0 4px; background: #fff;
  font-size: 12px; line-height: 21px; color: #222;
`;
const Collapse = styled.div`
  height: 16px; margin-top: -3px; border-bottom: 1px solid #ccc; display: flex; align-items: center; justify-content: center;
`;
const CollapseTri = styled.i`
  display: block; width: 0; height: 0;
  border-left: 4.5px solid transparent; border-right: 4.5px solid transparent; border-bottom: 5px solid #222;
`;
const DlgFoot = styled.div`
  height: 43px; display: flex; align-items: center; justify-content: flex-end; gap: 5px; padding: 0 16px 1px 0;
`;
const Btn = styled.div<{ $primary?: boolean }>`
  width: 54px; height: 25px; display: flex; align-items: center; justify-content: center; font-size: 12px; line-height: 16px; padding-top: 1px;
  border: 1px solid ${DEEP}; background: ${p => (p.$primary ? DEEP : '#f0f0f0')}; color: ${p => (p.$primary ? '#fff' : '#333')};
`;
const Overlay = styled.svg`position: absolute; left: 0; top: 0; pointer-events: none;`;
const Watermark = styled.div`
  position: absolute; right: 4px; bottom: 3px; font: 14px/18px "Liberation Mono","Noto Sans CJK SC",monospace;
  letter-spacing: 1.4px; color: #828282; font-weight: 300; white-space: nowrap;
`;

/* ---------- data ---------- */
type Kind = 'minus' | 'leaf' | 'child' | 'childplus';
const tree: { kind: Kind; text: string; icon?: React.ReactNode; eye?: boolean; tick?: number; fs?: number }[] = [
  { kind: 'minus', text: '基本机电对象' },
  { kind: 'child', text: 'ObjectSource(1)', icon: <ObjTiny />, tick: 10, fs: 12.4 },
  { kind: 'childplus', text: '块 (1)', icon: <BlockTiny />, eye: true, tick: 10 },
  { kind: 'childplus', text: '块 (2)', icon: <BlockTiny />, eye: true, tick: 10 },
  { kind: 'minus', text: '运动副和约束' },
  { kind: 'child', text: '块 (1)_FJ(1)', icon: <JointTiny />, tick: 10 },
  { kind: 'leaf', text: '材料' },
  { kind: 'leaf', text: '耦合副' },
  { kind: 'minus', text: '传感器和执行器' },
  { kind: 'child', text: 'TS(1)', icon: <BeltTiny />, tick: 3 },
  { kind: 'leaf', text: '运行时行为' },
  { kind: 'leaf', text: '信号' },
  { kind: 'leaf', text: '信号连接' },
];
const railSpec: { c: number; h?: number; on?: boolean; pl?: number; el: React.ReactNode }[] = [
  { c: 191, pl: 0, el: <GearI /> },
  { c: 241, el: <FourI /> },
  { c: 283, h: 46, on: true, el: <AsmI /> },
  { c: 325, el: <AnalyzeI /> },
  { c: 367, el: <ParamI /> },
  { c: 408, el: <CubesI /> },
  { c: 452, el: <BowI /> },
  { c: 493, el: <BracketI /> },
  { c: 535, el: <BooksI /> },
  { c: 577, el: <BracketI dims /> },
  { c: 620, el: <MagBoxI /> },
  { c: 660, el: <ClockI fill /> },
  { c: 717, el: <InfoI /> },
  { c: 769, el: <GlobeI /> },
  { c: 822, el: <ClockI /> },
  { c: 866, el: <ColorI /> },
  { c: 908, el: <ToolI /> },
];
let railY = 178;
const railItems = railSpec.map((r) => {
  const h = r.h ?? 26;
  const top = r.c - h / 2;
  const mt = top - railY;
  railY = top + h;
  return { ...r, h, mt };
});

const LargeBtn = ({ icon, label, ml, w, noCaret, dim }: { icon: React.ReactNode; label: string; ml?: number; w?: number; noCaret?: boolean; dim?: boolean }) => (
  <Large $ml={ml} $w={w}>
    <IconSlot>{icon}</IconSlot>
    <LargeLabel $dim={dim}>{label}</LargeLabel>
    {!noCaret && <Caret />}
  </Large>
);
const Foot = ({ name, caret = true }: { name: string; caret?: boolean }) => (
  <GroupFoot><GroupName>{name}</GroupName>{caret ? <Caret /> : <span />}</GroupFoot>
);
const Small = ({ icon, text, gap }: { icon: React.ReactNode; text: string; gap?: number }) => (
  <SmallItem>{icon}<SmallText>{text}</SmallText>{gap !== undefined && <Caret $ml={gap - 4} />}</SmallItem>
);

const Field = ({ label, val, unit, w, mt }: { label: string; val: React.ReactNode; unit: string; w: number; mt?: number }) => (
  <FieldRow $mt={mt}>
    <FieldLabel>{label}</FieldLabel>
    <NumBox>
      <NumVal>{val}</NumVal>
      <Unit $w={w}>{unit}<Caret $mt={-1} /></Unit>
      <OuterDrop><Caret /></OuterDrop>
    </NumBox>
  </FieldRow>
);

const Scene = () => (
  <Canvas width={1149} height={758} viewBox="337 202 1149 758" fill="none">
    {/* plate */}
    <polygon points="665,507 1003,717.7 1003,708 665,499" fill="#b36b00" />
    <polygon points="1003,717.7 1474,549.3 1474,537.3 1003,708" fill="#e98d06" />
    <polygon points="660,490.5 1129.3,321.7 1474,537.3 1003,708.3 660,497" fill="#ffa743" />
    <path d="M1003 708.3 1474 537.3" stroke="#f99a33" strokeWidth="2" />
    <path d="M665 507 1003 717.7 1474 549.3" stroke="#5b4a30" strokeWidth=".7" />
    <path d="M1003 708.3V717.7M1474 537.3V549.3" stroke="#6a4d1a" strokeWidth="1" />
    {/* csys frame */}
    <path d="M665 440.7 712.3 423.3V473M665 447 697.7 467V526.7" stroke="#2a3cff" strokeWidth="1" strokeDasharray="3 .5" />
    <path d="M712.3 473V490M698 467V526.7" stroke="#a99ef0" strokeWidth="1.3" />
    <path d="M665 505 727 545" stroke="#1414f5" strokeWidth="1" />
    <polygon points="727,543 739,549 730,551" fill="#0a0ae6" />
    <path d="M739 557 745 549M739 549 745 557" stroke="#4a4af0" />
    <path d="M716 483 753 507 700 526.7" stroke="#d6c7b8" strokeWidth="1.2" />
    <path d="M713 481.7 753 468" stroke="#d0d0d0" strokeWidth="1.2" />
    <polygon points="753,466 767,463 755,471" fill="#eee" stroke="#999" strokeWidth=".6" />
    <path d="M769 459l3 3.5v5M775 459l-3 3.5" stroke="#c9c9c9" strokeWidth="1.1" />
    <polygon points="665,499.5 712,478.5 728,478.5 713,486 665,501" fill="#a89a6c" stroke="#8a7d52" strokeWidth=".5" />
    <ellipse cx="713.5" cy="482" rx="1.8" ry="3.8" fill="#6b6140" />
    {/* cube */}
    <polygon points="830.7,559 858.7,575.7 859,616.7 831.7,600" fill="#b36d00" stroke="#55504a" strokeWidth=".8" />
    <polygon points="858.7,575.7 895.7,562.7 896.7,604 859,616.7" fill="#e98c00" stroke="#55504a" strokeWidth=".8" />
    <polygon points="830.7,559 868.3,545.3 895.7,562.7 858.7,575.7" fill="#ffa200" stroke="#55504a" strokeWidth=".8" />
    {/* ground triad below the dialog */}
    <path d="M414 927 439.7 950.7 473 931.7M439.7 925V950.7" stroke="#c9c9c9" />
    <polygon points="454,925 467,925 476,934 483,936 488,945 474,941 470,936" fill="#d81f2b" />
    <path d="M489 944 497 952M497 944 489 952" stroke="#e2343a" />
  </Canvas>
);

export default function App() {
  return (
    <Page>
      <Global />
      <TitleBar>
        <Logo>NX</Logo>
        <QSep $ml={5} />
        <QSlot $ml={9}><SaveI /></QSlot>
        <QSep $ml={6} />
        <QSlot $ml={6}><UndoI /></QSlot>
        <Caret $c="#fff" $op={.4} $ml={7} />
        <QSlot $ml={8}><RedoI /></QSlot>
        <QSep $ml={6} />
        <QSlot $ml={6}><CutI /></QSlot>
        <QSlot $ml={7}><CopyI /></QSlot>
        <QSlot $ml={7}><PasteI /></QSlot>
        <QSlot $ml={7}><MoveI /></QSlot>
        <QSep $ml={7} />
        <QSlot $ml={5}><ObjSrcSm /></QSlot>
        <Caret $c="#fff" $ml={8} />
        <QSep $ml={7} />
        <QSlot $ml={6}><MicI /></QSlot>
        <QSep $ml={8} />
        <QSlot $ml={6}><EraserI /></QSlot>
        <QSep $ml={6} />
        <QSlot $ml={6}><WinAI /></QSlot>
        <QSlot $ml={7}><WinBI /></QSlot>
        <QText>窗口</QText>
        <Caret $c="#fff" $ml={4} />
        <QSlot $ml={6}><Ic w={7} h={7}><path d="M0 .5h7M0 2.5l3.5 4 3.5-4z" stroke="#fff" fill="#fff" strokeWidth=".6" /></Ic></QSlot>
        <AppName>NX - 机电概念设计</AppName>
      </TitleBar>
      <MenuBar>
        <MenuTab $mr={9}>文件(F)</MenuTab>
        <MenuTab $on>主页</MenuTab>
        {['建模', '装配', '曲线', '分析', '视图', '选择', '渲染', '工具'].map((t) => <MenuTab key={t}>{t}</MenuTab>)}
        <MenuTab $mr={1}>PMI</MenuTab>
        <MenuTab>应用模块</MenuTab>
      </MenuBar>

      <Ribbon>
        <Group $w={129}>
          <GroupBody>
            <LargeBtn ml={12} w={33} icon={<Puzzle />} label="需求" />
            <SmallCol $ml={9}>
              <Small icon={<FuncI />} text="功能" gap={4} />
              <Small icon={<LogicI />} text="逻辑" gap={4} />
              <Small icon={<RelI />} text="相关对象" />
            </SmallCol>
          </GroupBody>
          <Foot name="系统工程" />
        </Group>
        <Group $w={121}>
          <GroupBody>
            <LargeBtn ml={11} w={34} icon={<SketchI />} label="草图" />
            <SmallCol $ml={8}>
              <Small icon={<ExtrudeI />} text="拉伸" gap={8} />
              <Small icon={<UniteI />} text="合并" gap={8} />
              <Small icon={<BlockI />} text="块" gap={8} />
            </SmallCol>
          </GroupBody>
          <Foot name="机械概念" />
        </Group>
        <Group $w={322}>
          <GroupBody>
            <LargeBtn ml={11} w={34} icon={<PlayBig />} label="播放" noCaret />
            <LargeBtn ml={6} w={34} icon={<StopBig />} label="停止" noCaret dim />
            <SmallCol $ml={9}>
              <SmallItem><RewI /></SmallItem><SmallItem><PauseI /></SmallItem><SmallItem><ClockPlayI /></SmallItem>
            </SmallCol>
            <SmallCol $ml={9}>
              <SmallItem><NextI /></SmallItem><SmallItem><MarkI /></SmallItem><SmallItem><CamSaveI /></SmallItem>
            </SmallCol>
            <SmallCol $ml={5}>
              <TallItem><Magnifier /></TallItem><TallItem><StackCam /></TallItem>
            </SmallCol>
            <SmallCol $ml={11}>
              <SmallItem><DimCircle /></SmallItem><SmallItem><DimSquare /></SmallItem><SmallItem><DimPlay /></SmallItem>
            </SmallCol>
            <SmallCol $ml={9}>
              <TallItem $gap={2}><MonitorI /><SmallText>监视</SmallText></TallItem>
              <TallItem $gap={2}><ChartI /><SmallText>图</SmallText></TallItem>
            </SmallCol>
            <SmallCol $ml={9}>
              <TallItem><WrapI /><SmallText>包络</SmallText></TallItem>
              <TallItem><InterfI /><SmallText>干涉</SmallText></TallItem>
            </SmallCol>
          </GroupBody>
          <Foot name="仿真" />
        </Group>
        <Group $w={258}>
          <GroupBody>
            <LargeBtn ml={12} icon={<RigidI />} label="刚体颜色" />
            <LargeBtn ml={9} icon={<ObjSrcBig />} label="对象源" />
            <LargeBtn ml={8} icon={<CollideI />} label="碰撞体" />
            <LargeBtn ml={8} icon={<JointI />} label="基本运动副" />
            <LargeBtn ml={17} icon={<MoreI />} label="更多" />
          </GroupBody>
          <Foot name="机械" />
        </Group>
        <Group $w={174}>
          <GroupBody>
            <LargeBtn ml={12} icon={<SensorI />} label="碰撞传感器" />
            <LargeBtn ml={8} icon={<PosI />} label="位置控制" />
            <LargeBtn ml={8} icon={<TableI />} label="符号表" />
          </GroupBody>
          <Foot name="电气" />
        </Group>
        <Group $w={222}>
          <GroupBody>
            <LargeBtn ml={11} icon={<SimSeqI />} label="仿真序列" />
            <LargeBtn ml={9} icon={<CamI />} label="电子凸轮" />
            <LargeBtn ml={8} w={52} icon={<NcI />} label="运行时 NC" />
            <LargeBtn ml={8} icon={<TableI />} label="符号表" />
          </GroupBody>
          <Foot name="自动化" />
        </Group>
        <Group $w={292}>
          <GroupBody>
            <LargeBtn ml={12} icon={<AddCompI />} label="添加组件" />
            <LargeBtn ml={9} w={65} icon={<EcadI />} label="导出至 ECAD" />
            <LargeBtn ml={8} icon={<LoadI />} label="导出载荷曲线" />
            <LargeBtn ml={8} icon={<ExpTableI />} label="导出凸轮曲线" />
          </GroupBody>
          <Foot name="设计协同" caret={false} />
        </Group>
      </Ribbon>

      <Toolbar>
        <TSlot $ml={12}><MenuI /></TSlot>
        <TText>菜单(<U>M</U>)</TText>
        <Caret $ml={5} />
        <TSep $ml={8} />
        <TSelect $w={149} $ml={12}>面<Caret /></TSelect>
        <TSlot $ml={8}><FilterDim /></TSlot>
        <TSelect $w={156} $ml={10}>整个装配<Caret /></TSelect>
        <TSlot $ml={8}><FilterSel /></TSlot>
        <Caret $ml={4} />
        <TSlot $ml={9}><SnapI /></TSlot>
        <TSlot $ml={7}><SnapDim /></TSlot>
        <TSlot $ml={7}><BoxCross /></TSlot>
        <TSlot $ml={7}><SqCross /></TSlot>
        <Caret $ml={6} />
        <TSlot $ml={10}><BoxLine /></TSlot>
        <TSlot $ml={7}><BoxEdge /></TSlot>
        <TSep $ml={10} />
      </Toolbar>

      <Main>
        <Rail>
          {railItems.map((r, i) => <RailItem key={i} $h={r.h} $mt={r.mt} $on={r.on} $pl={r.pl}>{r.el}</RailItem>)}
        </Rail>
        <Nav>
          <NavHead>机电导航器<MaxI /></NavHead>
          <TreeFrame>
            <TableHead>
              <ColName>名称<SortUp /></ColName>
              <ColVis>可...</ColVis>
            </TableHead>
            <Rows>
              {Array.from({ length: 35 }).map((_, i) => {
                const r = tree[i];
                return (
                  <Row key={i} $alt={i % 2 === 1}>
                    <CellName>
                      {r && <Guide kind={r.kind} row={i} />}
                      {r && !r.icon && <><FolderI /><FolderGap /></>}
                      {r && r.icon && <><LeafCheck><CheckBoxI /></LeafCheck><LeafIcon>{r.icon}</LeafIcon></>}
                      {r && <LeafText $fs={r.fs}>{r.text}</LeafText>}
                    </CellName>
                    <CellVis>{r?.eye && <EyeI />}</CellVis>
                    <CellEnd>{r?.tick && <Tick $h={r.tick} />}</CellEnd>
                  </Row>
                );
              })}
            </Rows>
            <ScrollBar>
              <Chevron $d="l" />
              <Thumb />
              <Chevron $d="r" />
            </ScrollBar>
          </TreeFrame>
          <BottomBar />
          <SearchRow><SideTri />检索</SearchRow>
        </Nav>
        <Work>
          <TabBar>
            <FileTab>
              <TabGear />
              <TabName>_model1.prt</TabName>
              <DocI />
              <TabX><Ic w={9} h={9}><path d="M1 1l7 7M8 1 1 8" stroke="#eee" strokeWidth="1.6" /></Ic></TabX>
            </FileTab>
          </TabBar>
          <Viewport>
            <Scene />
            <Dialog>
              <DlgHead>
                <GearI c="#fff" hole={DEEP} />
                <DlgTitle>传输面</DlgTitle>
                <RefreshI />
                <DlgHelp>?</DlgHelp>
                <CloseI />
              </DlgHead>
              <DlgBody>
                <Section>
                  <SecHead><Tri />传送带面</SecHead>
                  <SelectRow>
                    <SelectMain><OkCheck />选择面 (1)</SelectMain>
                    <SelectBtn><FaceBtnI /></SelectBtn>
                  </SelectRow>
                </Section>
                <Section>
                  <SecHead><Tri />速度和位置</SecHead>
                  <Box $mt={4}>
                    <BoxTitle>运动类型</BoxTitle>
                    <RadioRow><Radio $on />直线</RadioRow>
                    <RadioRow><Radio />圆</RadioRow>
                    <Gap $h={3} />
                  </Box>
                  <VecRow>
                    <OkCheck />
                    <VecText>指定矢量</VecText>
                    <VecBtn><VecA /></VecBtn>
                    <VecBtn><VecB /></VecBtn>
                    <VecSplit>
                      <VecMain><VecC /></VecMain>
                      <VecDrop><Caret /></VecDrop>
                    </VecSplit>
                  </VecRow>
                  <Box $mt={3}>
                    <FoldHead><Tri $s={3.5} />速度</FoldHead>
                    <FieldRow $mt={6}>
                      <FieldLabel>平行</FieldLabel>
                      <NumBox>
                        <NumVal>14<Cursor />0</NumVal>
                        <Unit $w={58}>mm/s<Caret $mt={-1} /></Unit>
                        <OuterDrop><Caret /></OuterDrop>
                      </NumBox>
                    </FieldRow>
                    <Field label="垂直" val="0" unit="mm/s" w={58} mt={2} />
                    <Gap $h={8} />
                  </Box>
                  <Box $mt={2}>
                    <FoldHead><Tri $s={3.5} />起始位置</FoldHead>
                    <Field label="平行" val="0" unit="mm" w={39} mt={7} />
                    <Field label="垂直" val="0" unit="mm" w={39} mt={2} />
                    <Gap $h={8} />
                  </Box>
                  <Gap $h={8} />
                </Section>
                <Section>
                  <SecHead><Tri />碰撞材料</SecHead>
                  <PlainRow $h={25} $mt={4}>材料<DropBox>默认材料<Caret /></DropBox></PlainRow>
                  <PlainRow $h={31} $mt={2}>新建碰撞材料<MatBtn><MatI /></MatBtn></PlainRow>
                  <Gap $h={9} />
                </Section>
                <Section>
                  <SecHead><Tri />碰撞体</SecHead>
                  <DisabledRow>
                    <DisabledBox><Ic w={9} h={9}><path d="M.5 4.5l3 3 5-7" stroke="#bbb" strokeWidth="1.2" /></Ic></DisabledBox>
                    创建碰撞体
                  </DisabledRow>
                </Section>
                <Section>
                  <SecHead><Tri />名称</SecHead>
                  <NameInput>TS(1)</NameInput>
                </Section>
                <Collapse><CollapseTri /></Collapse>
              </DlgBody>
              <DlgFoot>
                <Btn $primary>确定</Btn>
                <Btn>取消</Btn>
              </DlgFoot>
            </Dialog>
          </Viewport>
        </Work>
      </Main>

      <Overlay width={1486} height={960} viewBox="0 0 1486 960">
        <polygon points="158,424.5 364,464 366,462.5 381,473.5 362,478.5 362,473" fill="#3b61d4" />
      </Overlay>
      <Watermark>UG爱好者论坛@伤口上撒盐</Watermark>
    </Page>
  );
}
